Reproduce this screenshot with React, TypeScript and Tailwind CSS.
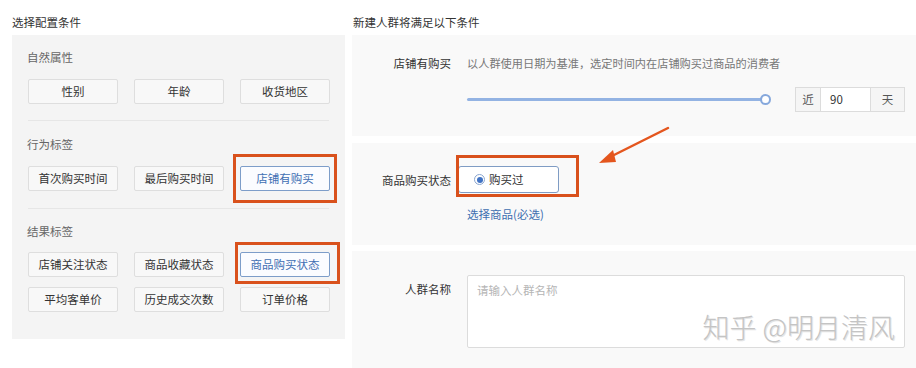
const font = { fontFamily: '"Noto Sans CJK SC", "Noto Sans", sans-serif' };

function Tag({ label, active = false }: { label: string; active?: boolean }) {
  return (
    <div
      className={
        "h-[25px] w-[90px] flex items-center justify-center rounded-[2px] border text-[11.5px] " +
        (active
          ? "border-[#7d9dc9] bg-[#fbfcff] text-[#3f6fb3]"
          : "border-[#dedede] bg-[#f8f8f8] text-[#333]")
      }
    >
      {label}
    </div>
  );
}

function Marked({ children, box }: { children: React.ReactNode; box: string }) {
  return (
    <div className="relative">
      {children}
      <div className={"absolute border-[3px] border-[#d9511c] pointer-events-none " + box} />
    </div>
  );
}

export default function App() {
  return (
    <div className="relative w-[916px] h-[368px] overflow-hidden bg-white text-[#333]" style={font}>
      <div className="flex">
        {/* left column */}
        <div className="pl-3 w-[345px] shrink-0">
          <div className="h-[35px] pt-[14px] text-[11.5px] leading-[16px] text-[#333]">选择配置条件</div>
          <div className="bg-[#f4f4f4] px-4 pt-[14px] pb-[27px]">
            <div className="text-[11.5px] leading-[16px] text-[#666] -ml-px">自然属性</div>
            <div className="mt-[14px] grid grid-cols-[90px_90px_90px] gap-x-4">
              <Tag label="性别" />
              <Tag label="年龄" />
              <Tag label="收货地区" />
            </div>
            <div className="mt-4 h-px bg-[#e6e6e6]" />
            <div className="mt-[15px] text-[11.5px] leading-[16px] text-[#666] -ml-px">行为标签</div>
            <div className="mt-[14px] grid grid-cols-[90px_90px_90px] gap-x-4">
              <Tag label="首次购买时间" />
              <Tag label="最后购买时间" />
              <Marked box="-left-[7px] -right-[7px] -top-[12px] -bottom-[12px]">
                <Tag label="店铺有购买" active />
              </Marked>
            </div>
            <div className="mt-[17px] h-px bg-[#e6e6e6]" />
            <div className="mt-[14px] text-[11.5px] leading-[16px] text-[#666] -ml-px">结果标签</div>
            <div className="mt-[13px] grid grid-cols-[90px_90px_90px] gap-x-4 gap-y-[10px]">
              <Tag label="店铺关注状态" />
              <Tag label="商品收藏状态" />
              <Marked box="-left-[5px] -right-[10px] -top-[10px] -bottom-[7px]">
                <Tag label="商品购买状态" active />
              </Marked>
              <Tag label="平均客单价" />
              <Tag label="历史成交次数" />
              <Tag label="订单价格" />
            </div>
          </div>
        </div>

        {/* right column */}
        <div className="ml-[7px] flex-1">
          <div className="h-[35px] pt-[14px] pl-px text-[11.5px] leading-[16px] text-[#333]">新建人群将满足以下条件</div>

          <div className="h-[101px] bg-[#f9f9f9] pt-5">
            <div className="flex">
              <div className="w-[99px] text-right text-[11.5px] leading-[16px] text-[#333]">店铺有购买</div>
              <div className="ml-4 text-[11.2px] leading-[16px] text-[#777]">
                以人群使用日期为基准，选定时间内在店铺购买过商品的消费者
              </div>
            </div>
            <div className="mt-4 flex items-center pl-[115px] pr-[11px]">
              <div className="relative flex-1 h-[3px] rounded-full bg-[#93b3e3] mr-[30px]">
                <div className="absolute -right-[6px] -top-[4px] w-[11px] h-[11px] rounded-full border-2 border-[#86a8dc] bg-white" />
              </div>
              <div className="flex h-[25px] border border-[#dcdcdc] text-[11.5px]">
                <div className="w-[25px] flex items-center justify-center bg-[#f5f5f5] border-r border-[#dcdcdc] text-[#555]">近</div>
                <div className="w-[49px] flex items-center pl-[9px] bg-white text-[#333]">90</div>
                <div className="w-[34px] flex items-center justify-center bg-[#f5f5f5] border-l border-[#dcdcdc] text-[#555]">天</div>
              </div>
            </div>
          </div>

          <div className="mt-[7px] h-[102px] bg-[#f9f9f9] pt-[23px]">
            <div className="flex items-center">
              <div className="w-[99px] text-right text-[11.5px] leading-[16px] text-[#333]">商品购买状态</div>
              <div className="ml-[7px]">
                <Marked box="-left-[2px] -right-[20px] -top-[11px] -bottom-[4px]">
                  <div className="h-[27px] w-[101px] flex items-center rounded-[3px] border border-[#7f9cc4] bg-white pl-[15px]">
                    <span className="w-[11px] h-[11px] rounded-full border border-[#8aa6d0] flex items-center justify-center">
                      <span className="w-[6px] h-[6px] rounded-full bg-[#3f72c4]" />
                    </span>
                    <span className="ml-[4px] text-[11.5px] text-[#333]">购买过</span>
                  </div>
                </Marked>
              </div>
            </div>
            <div className="mt-[13px] pl-[115px] text-[11.5px] leading-[16px] text-[#3e6fb0]">选择商品(必选)</div>
          </div>

          <div className="mt-[6px] h-[117px] bg-[#f9f9f9] pt-6">
            <div className="flex items-start">
              <div className="mt-[6px] w-[99px] text-right text-[11.5px] leading-[16px] text-[#333]">人群名称</div>
              <div className="relative ml-4 mr-[11px] flex-1 h-[73px] rounded-[2px] border border-[#dcdcdc] bg-white pl-[9px] pt-[6px] text-[11.5px] leading-[16px] text-[#b5b5b5]">
                请输入人群名称
                <div className="absolute right-[9px] bottom-[4px] text-[27px] leading-[32px] font-light text-[#c4c4c4] [text-shadow:1px_1px_0_#e6e6e6]">
                  知乎 @明月清风
                </div>
              </div>
            </div>
          </div>
        </div>
      </div>

      {/* annotation arrow */}
      <svg className="absolute left-[594px] top-[122px]" width="80" height="46" viewBox="0 0 80 46">
        <line x1="74" y1="6" x2="14" y2="36" stroke="#e4561e" strokeWidth="2.5" strokeLinecap="round" />
        <polygon points="5,41 19,28 22,40" fill="#e4561e" />
      </svg>
    </div>
  );
}
